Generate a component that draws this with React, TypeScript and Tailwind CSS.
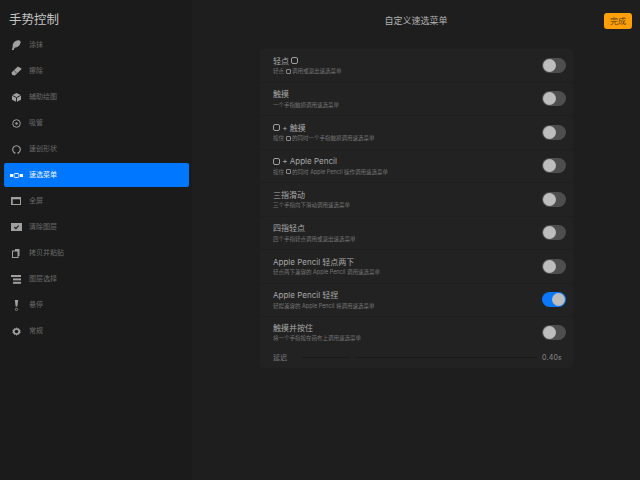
import React from "react";

const font = "font-['Inter','Noto_Sans_CJK_SC',sans-serif]";

const Icon: React.FC<{ name: string }> = ({ name }) => {
  const fill = name === "menu" ? "#ffffff" : "#a0a0a0";
  switch (name) {
    case "smudge":
      return (
        <svg width="10" height="10" viewBox="0 0 10 10">
          <path d="M0.8 10 L1.6 7.2 L1.8 4.2 Q3.4 0.8 7 0.2 Q9.8 -0.2 9.6 2.4 Q9.4 5.6 6.4 7 L3.6 7.8 L2.6 10 Z" fill={fill} />
        </svg>
      );
    case "erase":
      return (
        <svg width="11" height="10" viewBox="0 0 11 10">
          <path d="M0.5 6.4 L6.8 0.6 L10.6 2.4 L10 3.8 L3.8 9.4 L1.2 9 Z" fill={fill} />
          <path d="M3 4.4 L5.4 7" stroke="#1b1b1b" strokeWidth="0.6" />
        </svg>
      );
    case "cube":
      return (
        <svg width="9" height="9" viewBox="0 0 9 9">
          <path d="M4.5 0 L9 2.2 V6.8 L4.5 9 L0 6.8 V2.2 Z" fill={fill} />
          <path d="M0.3 2.4 L4.5 4.6 L8.7 2.4 M4.5 4.6 V9" stroke="#1b1b1b" strokeWidth="0.9" fill="none" />
        </svg>
      );
    case "picker":
      return (
        <svg width="9" height="9" viewBox="0 0 9 9" fill="none">
          <circle cx="4.5" cy="4.5" r="3.8" stroke={fill} strokeWidth="1" />
          <circle cx="4.5" cy="4.5" r="1.2" fill={fill} />
        </svg>
      );
    case "shape":
      return (
        <svg width="9" height="9" viewBox="0 0 9 9" fill="none">
          <path d="M2.8 8 A3.8 3.8 0 1 1 6.2 8" stroke={fill} strokeWidth="1.1" />
          <path d="M2 8 H3.6 M5.4 8 H7" stroke={fill} strokeWidth="1" />
        </svg>
      );
    case "menu":
      return (
        <svg width="13" height="5" viewBox="0 0 13 5" fill="none">
          <rect x="0" y="1" width="3" height="3" fill={fill} />
          <rect x="10" y="1" width="3" height="3" fill={fill} />
          <rect x="4" y="0.5" width="5" height="4" rx="1.2" stroke={fill} strokeWidth="1" />
        </svg>
      );
    case "full":
      return (
        <svg width="10" height="8" viewBox="0 0 10 8" fill="none">
          <rect x="0.5" y="0.5" width="9" height="7" stroke={fill} />
          <rect x="0.5" y="0.5" width="9" height="1.8" fill={fill} />
          <rect x="0.5" y="2" width="1.2" height="5.5" fill={fill} />
        </svg>
      );
    case "clear":
      return (
        <svg width="11" height="8" viewBox="0 0 11 8">
          <rect width="11" height="8" fill={fill} />
          <path d="M3.4 4 L4.9 5.6 L7.6 2.6" stroke="#1b1b1b" strokeWidth="1.1" fill="none" />
        </svg>
      );
    case "copy":
      return (
        <svg width="8" height="9" viewBox="0 0 8 9" fill="none">
          <rect x="3" y="0" width="4.5" height="7" fill={fill} />
          <rect x="0.5" y="2" width="5.5" height="6.5" fill="#1b1b1b" stroke={fill} />
        </svg>
      );
    case "layers":
      return (
        <svg width="10" height="9" viewBox="0 0 10 9">
          <rect x="0" y="0" width="10" height="2" fill={fill} />
          <rect x="2" y="3.4" width="8" height="2" fill={fill} />
          <rect x="2" y="6.8" width="8" height="2" fill={fill} />
        </svg>
      );
    case "hover":
      return (
        <svg width="5" height="11" viewBox="0 0 5 11" fill="none">
          <path d="M0.8 0 H4.2 L3.4 6.4 H1.6 Z" fill={fill} />
          <circle cx="2.5" cy="9.4" r="1.2" stroke={fill} strokeWidth="0.7" />
        </svg>
      );
    default:
      return (
        <svg width="9" height="9" viewBox="0 0 11 11" fill="none">
          <path d="M5.5 0.4 L6.6 1.8 L8.4 1.4 L8.9 3.1 L10.6 3.8 L9.9 5.5 L10.6 7.2 L8.9 7.9 L8.4 9.6 L6.6 9.2 L5.5 10.6 L4.4 9.2 L2.6 9.6 L2.1 7.9 L0.4 7.2 L1.1 5.5 L0.4 3.8 L2.1 3.1 L2.6 1.4 L4.4 1.8 Z" fill={fill} />
          <circle cx="5.5" cy="5.5" r="2.2" fill="#1b1b1b" />
        </svg>
      );
  }
};

const navItems = [
  { icon: "smudge", label: "涂抹" },
  { icon: "erase", label: "擦除" },
  { icon: "cube", label: "辅助绘图" },
  { icon: "picker", label: "吸管" },
  { icon: "shape", label: "速创形状" },
  { icon: "menu", label: "速选菜单", active: true },
  { icon: "full", label: "全屏" },
  { icon: "clear", label: "清除图层" },
  { icon: "copy", label: "拷贝并粘贴" },
  { icon: "layers", label: "图层选择" },
  { icon: "hover", label: "悬停" },
  { icon: "gear", label: "常规" },
];

const Sq = () => (
  <span className="inline-block w-[5px] h-[5px] rounded-[1px] border-[0.5px] border-[#8a8a8a] align-[-0.5px]" />
);
const SqBig = () => (
  <span className="inline-block w-[7px] h-[7px] rounded-[2px] border-[0.75px] border-[#a0a0a0] align-[-0.5px]" />
);

const rows: { title: React.ReactNode; sub: React.ReactNode; on?: boolean }[] = [
  { title: <>轻点 <SqBig /></>, sub: <>轻点 <Sq /> 调用或退出速选菜单</> },
  { title: "触摸", sub: "一个手指触摸调用速选菜单" },
  { title: <><SqBig /> + 触摸</>, sub: <>按住 <Sq /> 的同时一个手指触摸调用速选菜单</> },
  { title: <><SqBig /> + Apple Pencil</>, sub: <>按住 <Sq /> 的同时 Apple Pencil 操作调用速选菜单</> },
  { title: "三指滑动", sub: "三个手指向下滑动调用速选菜单" },
  { title: "四指轻点", sub: "四个手指轻点调用或退出速选菜单" },
  { title: "Apple Pencil 轻点两下", sub: "轻点两下兼容的 Apple Pencil 调用速选菜单" },
  { title: "Apple Pencil 轻捏", sub: "轻捏兼容的 Apple Pencil 将调用速选菜单", on: true },
];

const Toggle: React.FC<{ on?: boolean }> = ({ on }) => (
  <div className={`w-[24px] h-[15px] rounded-full flex items-center px-[1px] ${on ? "bg-[#0a78fb] justify-end" : "bg-[#4e4e4e] justify-start"}`}>
    <div className="w-[13px] h-[13px] rounded-full bg-[#bdbdbd]" />
  </div>
);

const RowText: React.FC<{ title: React.ReactNode; sub: React.ReactNode }> = ({ title, sub }) => (
  <div className="flex flex-col">
    <span className="text-[8px] leading-[11px] h-[11px] text-[#a8a8a8]">{title}</span>
    <span className="text-[5.5px] leading-[8px] h-[8px] mt-[0.5px] text-[#767676]">{sub}</span>
  </div>
);

export default function App() {
  return (
    <div className={`${font} w-[640px] h-[480px] flex bg-[#1e1e1e] overflow-hidden`}>
      <aside className="w-[192px] h-full bg-[#1b1b1b] flex flex-col pl-[4px] pr-[3px]">
        <h1 className="text-[12.5px] leading-[16px] text-[#c4c4c4] pl-[5px] pt-[12px] pb-[5px]">手势控制</h1>
        <nav className="flex flex-col gap-[2px]">
          {navItems.map((item) => (
            <div
              key={item.label}
              className={`h-[24px] flex items-center rounded-[2px] ${item.active ? "bg-[#0077ff] text-[#e8f2ff]" : "text-[#6a6a6a]"}`}
            >
              <span className="w-[24px] flex justify-center shrink-0"><Icon name={item.icon} /></span>
              <span className="text-[7px] leading-[10px] pl-[1px]">{item.label}</span>
            </div>
          ))}
        </nav>
      </aside>
      <main className="flex-1 flex flex-col">
        <header className="h-[49px] flex items-start relative">
          <div className="w-full text-center text-[9px] leading-[12px] text-[#b4b4b4] pt-[15px]">自定义速选菜单</div>
          <button className="absolute right-[8px] top-[13px] w-[28px] h-[16px] rounded-[3px] bg-[#ff9f0a] text-[8px] leading-[16px] text-[#5a3c08] text-center">完成</button>
        </header>
        <section className="ml-[68px] w-[313px] h-[319px] rounded-[4px] bg-[#222222] flex flex-col">
          {rows.map((row, i) => (
            <div key={i} className="h-[33.5px] shrink-0 flex items-center justify-between pl-[13px] pr-[7px] border-b border-[#1e1e1e]">
              <RowText title={row.title} sub={row.sub} />
              <Toggle on={row.on} />
            </div>
          ))}
          <div className="h-[31px] shrink-0 flex items-center justify-between pl-[13px] pr-[7px]">
            <RowText title="触摸并按住" sub="将一个手指按在画布上调用速选菜单" />
            <Toggle />
          </div>
          <div className="flex-1 flex items-center pl-[13px] pr-[11px] pb-[1px]">
            <span className="text-[7px] leading-[10px] text-[#7c7c7c] w-[29px]">延迟</span>
            <div className="w-[48px] h-px bg-[#191919]" />
            <div className="w-[182px] h-px bg-[#191919] ml-[5px]" />
            <span className="ml-auto text-[7px] leading-[10px] tracking-[0.2px] text-[#8c8c8c]">0.40s</span>
          </div>
        </section>
      </main>
    </div>
  );
}
